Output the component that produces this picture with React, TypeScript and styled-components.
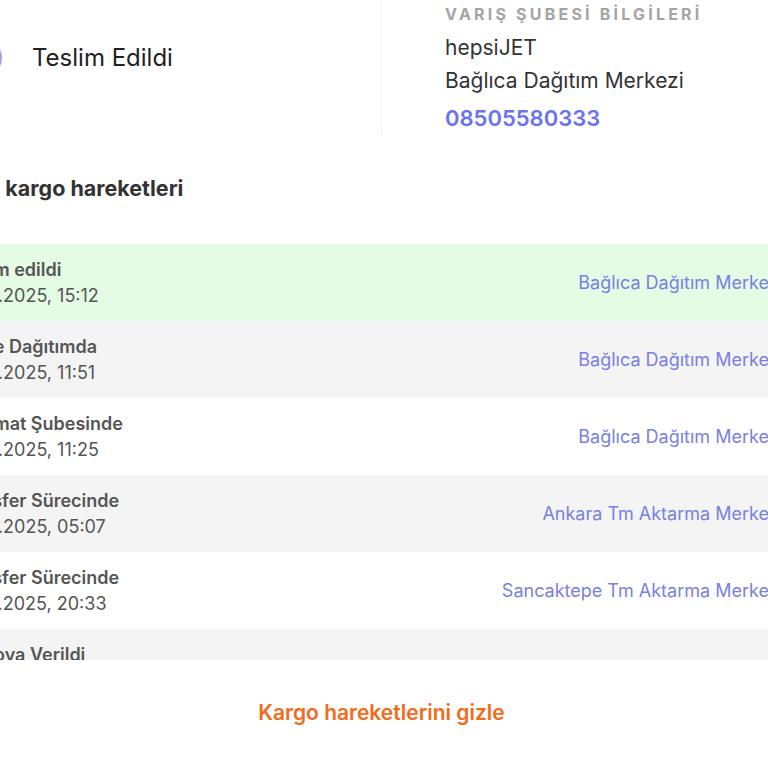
import { createGlobalStyle, styled } from "styled-components";

const GlobalStyle = createGlobalStyle`
  html, body {
    margin: 0;
    padding: 0;
    background: #ffffff;
  }
  body {
    font-family: Inter, "Noto Sans", "Liberation Sans", sans-serif;
    color: #333;
  }
`;

const Viewport = styled.div`
  width: 768px;
  height: 768px;
  overflow: hidden;
  background: #fff;
`;

const Card = styled.div`
  width: 887px;
  margin-left: -62px;
  display: flex;
  flex-direction: column;
`;

const Summary = styled.div`
  display: grid;
  grid-template-columns: 443px 1fr;
`;

const StatusCol = styled.div`
  display: flex;
  align-items: center;
  gap: 29px;
  padding: 38px 0 0 25px;
  align-self: start;
`;

const StatusIcon = styled.span`
  width: 40px;
  height: 40px;
  display: flex;
  align-items: center;
  justify-content: center;
  flex-shrink: 0;
`;

const StatusText = styled.div`
  font-size: 24px;
  line-height: 40px;
  color: #222;
`;

const BranchCol = styled.div`
  border-left: 1px solid #f3f3f3;
  padding: 3px 0 0 63px;
  display: flex;
  flex-direction: column;
`;

const BranchLabel = styled.div`
  font-size: 16px;
  line-height: 22px;
  font-weight: 700;
  letter-spacing: 3.2px;
  color: #a5a5a5;
  white-space: nowrap;
`;

const BranchLine = styled.div<{ $first?: boolean }>`
  font-size: 21px;
  line-height: 33px;
  color: #333;
  margin-top: ${(p) => (p.$first ? "6px" : "0")};
`;

const Phone = styled.a`
  font-size: 22px;
  line-height: 34px;
  font-weight: 600;
  color: #6a72f0;
  text-decoration: none;
  margin-top: 4px;
`;

const SectionTitle = styled.h3`
  margin: 39px 0 0;
  padding-left: 16px;
  font-size: 21.5px;
  line-height: 28px;
  font-weight: 700;
  color: #333;
  white-space: nowrap;
`;

const MovesList = styled.div`
  margin-top: 42px;
  height: 416px;
  overflow: hidden;
  display: flex;
  flex-direction: column;
`;

const MoveRow = styled.div<{ $tone: "done" | "gray" | "white" }>`
  flex-shrink: 0;
  height: 77px;
  box-sizing: border-box;
  padding: 0 42px 0 15px;
  display: flex;
  align-items: center;
  justify-content: space-between;
  background: ${(p) =>
    p.$tone === "done" ? "#e4fce4" : p.$tone === "gray" ? "#f4f4f5" : "#ffffff"};
`;

const MoveInfo = styled.div`
  display: flex;
  flex-direction: column;
  white-space: nowrap;
`;

const MoveTitle = styled.div`
  font-size: 18px;
  line-height: 26px;
  font-weight: 600;
  color: #555;
`;

const MoveDate = styled.div`
  font-size: 18px;
  line-height: 26px;
  color: #555;
`;

const MoveBranch = styled.div`
  font-size: 18px;
  line-height: 26px;
  color: #7a80e2;
  text-align: right;
  white-space: nowrap;
`;

const ToggleButton = styled.button`
  align-self: center;
  margin-top: 38px;
  border: 0;
  background: none;
  padding: 0;
  font-family: inherit;
  font-size: 21px;
  line-height: 30px;
  font-weight: 600;
  color: #f26b1d;
  cursor: pointer;
`;

const moves = [
  { title: "Teslim edildi", date: "14.05.2025, 15:12", branch: "Bağlıca Dağıtım Merkezi" },
  { title: "Kurye Dağıtımda", date: "14.05.2025, 11:51", branch: "Bağlıca Dağıtım Merkezi" },
  { title: "Teslimat Şubesinde", date: "14.05.2025, 11:25", branch: "Bağlıca Dağıtım Merkezi" },
  { title: "Transfer Sürecinde", date: "14.05.2025, 05:07", branch: "Ankara Tm Aktarma Merkezi" },
  { title: "Transfer Sürecinde", date: "13.05.2025, 20:33", branch: "Sancaktepe Tm Aktarma Merkezi" },
  { title: "Kargoya Verildi", date: "13.05.2025, 16:40", branch: "Tuzla Dağıtım Merkezi" },
];

const App = () => {
  return (
    <Viewport>
      <GlobalStyle />
      <Card>
        <Summary>
          <StatusCol>
            <StatusIcon>
              <svg width="40" height="40" viewBox="0 0 40 40" fill="none">
                <circle cx="20" cy="20" r="18" stroke="#9ea3ec" strokeWidth="2" />
                <path d="M12 20.5l5.5 5.5L28 15" stroke="#7a80e2" strokeWidth="2.5" strokeLinecap="round" strokeLinejoin="round" />
              </svg>
            </StatusIcon>
            <StatusText>Teslim Edildi</StatusText>
          </StatusCol>
          <BranchCol>
            <BranchLabel>VARIŞ ŞUBESİ BİLGİLERİ</BranchLabel>
            <BranchLine $first>hepsiJET</BranchLine>
            <BranchLine>Bağlıca Dağıtım Merkezi</BranchLine>
            <Phone href="#">08505580333</Phone>
          </BranchCol>
        </Summary>

        <SectionTitle>Tüm kargo hareketleri</SectionTitle>

        <MovesList>
          {moves.map((m, i) => (
            <MoveRow key={i} $tone={i === 0 ? "done" : i % 2 === 1 ? "gray" : "white"}>
              <MoveInfo>
                <MoveTitle>{m.title}</MoveTitle>
                <MoveDate>{m.date}</MoveDate>
              </MoveInfo>
              <MoveBranch>{m.branch}</MoveBranch>
            </MoveRow>
          ))}
        </MovesList>

        <ToggleButton>Kargo hareketlerini gizle</ToggleButton>
      </Card>
    </Viewport>
  );
};

export default App;
